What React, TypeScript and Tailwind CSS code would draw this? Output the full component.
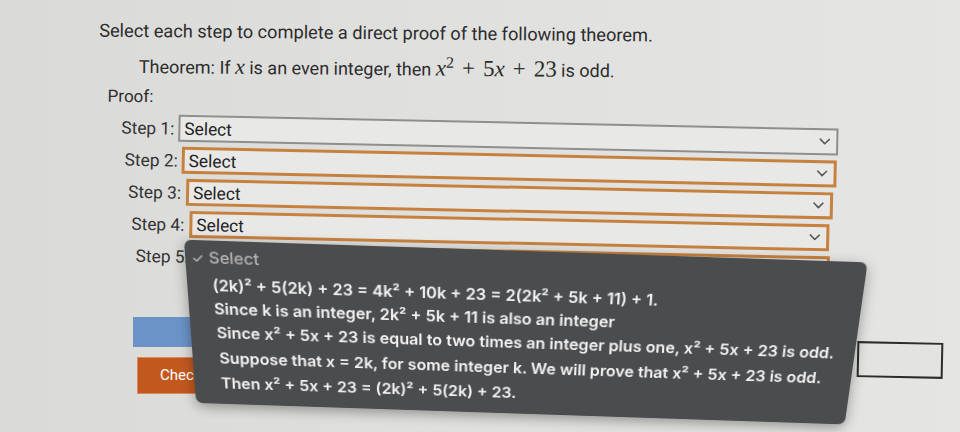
import React from "react";

const rows = [
  { label: "Step 1:", rowCls: "ml-[120px]", labelCls: "w-[57px]", boxCls: "w-[660px] border-2 border-[#8e8e8e]" },
  { label: "Step 2:", rowCls: "ml-[124px]", labelCls: "w-[57px]", boxCls: "w-[655px] border-[3px] border-[#c6813f]" },
  { label: "Step 3:", rowCls: "ml-[128px]", labelCls: "w-[58px]", boxCls: "w-[647px] border-[3px] border-[#c6813f]" },
  { label: "Step 4:", rowCls: "ml-[132px]", labelCls: "w-[58px]", boxCls: "w-[640px] border-[3px] border-[#c6813f]" },
  { label: "Step 5:", rowCls: "ml-[137px]", labelCls: "w-[58px]", boxCls: "w-[636px] border-[3px] border-[#c6813f]" },
];

const options = [
  { text: "(2k)² + 5(2k) + 23 = 4k² + 10k + 23 = 2(2k² + 5k + 11) + 1.", cls: "ml-[25px] h-[25px]" },
  { text: "Since k is an integer, 2k² + 5k + 11 is also an integer", cls: "ml-[25px] h-[24.6px]" },
  { text: "Since x² + 5x + 23 is equal to two times an integer plus one, x² + 5x + 23 is odd.", cls: "ml-[26px] h-[25.4px]" },
  { text: "Suppose that x = 2k, for some integer k. We will prove that x² + 5x + 23 is odd.", cls: "ml-[27px] h-[27.8px]" },
  { text: "Then x² + 5x + 23 = (2k)² + 5(2k) + 23.", cls: "ml-[27px] h-[26.2px]" },
];

function Chevron() {
  return (
    <svg width="11" height="7" viewBox="0 0 11 7" className="shrink-0">
      <polyline points="1,1 5.5,5.5 10,1" fill="none" stroke="#5a5a5a" strokeWidth="1.6" strokeLinecap="round" strokeLinejoin="round" />
    </svg>
  );
}

const mathFont = "[font-family:'Liberation_Serif',serif]";

export default function App() {
  return (
    <div className="relative w-[960px] h-[432px] overflow-hidden bg-gradient-to-r from-[#dadad8] via-[#e0e0de] to-[#e5e5e3] text-[#2c2c2c] [font-family:Roboto,'Liberation_Sans',sans-serif]">
      {/* intro text */}
      <div className="pt-[22px] rotate-[0.5deg]">
        <div className="ml-[99px] h-[24px] text-[18.2px] leading-[24px]">
          Select each step to complete a direct proof of the following theorem.
        </div>
        <div className="ml-[139px] mt-[11px] h-[24px] text-[18px] leading-[24px] flex items-baseline whitespace-nowrap">
          <span>Theorem: If&nbsp;</span>
          <span className={`${mathFont} italic text-[22px]`}>x</span>
          <span>&nbsp;is an even integer, then&nbsp;</span>
          <span className={`${mathFont} text-[23px]`}>
            <i>x</i>
            <sup className="text-[16px]">2</sup>
            <span className="mx-[8px]">+</span>
            <span>5</span>
            <i>x</i>
            <span className="mx-[8px]">+</span>
            <span>23</span>
          </span>
          <span>&nbsp;is odd.</span>
        </div>
        <div className="ml-[108px] mt-[6px] h-[24px] text-[17px] leading-[24px]">Proof:</div>
      </div>

      {/* steps */}
      <div className="mt-[10px] flex flex-col gap-[5px] rotate-[1.2deg]">
        {rows.map((r) => (
          <div key={r.label} className={`flex items-center h-[27px] ${r.rowCls}`}>
            <div className={`${r.labelCls} text-[17.3px] leading-[24px] text-[#333]`}>{r.label}</div>
            <div className={`${r.boxCls} h-[27px] bg-[#e8e8e7] flex items-center justify-between pl-[4px] pr-[6px]`}>
              <span className="text-[17.3px] leading-[20px] text-[#222]">Select</span>
              <Chevron />
            </div>
          </div>
        ))}
      </div>

      {/* buttons and answer box */}
      <div className="mt-[41px] flex items-start">
        <div className="flex flex-col">
          <div className="ml-[133px] w-[90px] h-[30px] bg-[#6c93c8]" />
          <div className="ml-[137px] mt-[10px] w-[100px] h-[37px] bg-[#c1581e] border border-[#d98a5c] flex items-center pl-[22px] text-[15px] text-white">
            Check
          </div>
        </div>
        <div className="ml-[620px] mt-[25px] w-[86px] h-[36px] border-2 border-[#2c2c2c] bg-[#e3e3e1] rotate-[1.2deg]" />
      </div>

      {/* open select menu */}
      <div className="absolute left-[190px] top-[249px] w-[666px] h-[171px] rounded-[7px] bg-[#4b4c4e] shadow-[0_4px_14px_rgba(0,0,0,0.35)] [transform:perspective(1000px)_rotate(1.9deg)_rotateX(-18deg)] pt-[5px] [font-family:Inter,'Noto_Sans',sans-serif] font-semibold text-[16.2px] text-[#f3f3f3]">
        <div className="h-[25px] flex items-center ml-[6px] text-[#b4b4b4] text-[16.5px] font-medium">
          <span className="w-[17px] text-[14px]">✓</span>
          <span>Select</span>
        </div>
        <div className="mt-[2.3px] flex flex-col">
          {options.map((o) => (
            <div key={o.text} className={`flex items-center whitespace-nowrap ${o.cls}`}>
              {o.text}
            </div>
          ))}
        </div>
      </div>
    </div>
  );
}
